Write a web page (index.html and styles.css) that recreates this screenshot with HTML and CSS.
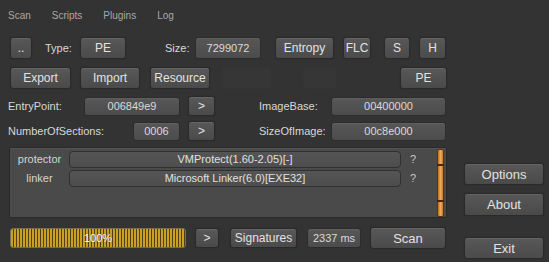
FILE: index.html
```html
<html lang="en"><head>
    <title>Detect It Easy</title>
    <meta charset="utf-8">
    <link rel="stylesheet" href="styles.css">
  </head>
  <body>

  <div id="window">
    <div id="tabs">
      <span class="tab">Scan</span>
      <span class="tab">Scripts</span>
      <span class="tab">Plugins</span>
      <span class="tab">Log</span>
    </div>

    <div id="content">
      <div id="main">

        <div class="row row-file">
          <span class="btn btn-dots">..</span>
          <span class="label label-type">Type:</span>
          <span class="btn btn-type">PE</span>
          <span class="label label-size">Size:</span>
          <span class="field field-size">7299072</span>
          <span class="btn btn-entropy">Entropy</span>
          <span class="btn btn-flc">FLC</span>
          <span class="btn btn-s">S</span>
          <span class="btn btn-h">H</span>
        </div>

        <div class="row row-tools">
          <span class="btn btn-export">Export</span>
          <span class="btn btn-import">Import</span>
          <span class="btn btn-resource">Resource</span>
          <span class="btn btn-off btn-off1"></span>
          <span class="btn btn-off btn-off2"></span>
          <span class="btn btn-pe">PE</span>
        </div>

        <div class="row row-info">
          <div class="pair">
            <span class="label">EntryPoint:</span>
            <span class="field field-ep">006849e9</span>
          </div>
          <span class="btn btn-go">&gt;</span>
          <div class="pair pair-right">
            <span class="label">ImageBase:</span>
            <span class="field field-wide">00400000</span>
          </div>
        </div>

        <div class="row row-info row-info2">
          <div class="pair">
            <span class="label">NumberOfSections:</span>
            <span class="field field-sec">0006</span>
          </div>
          <span class="btn btn-go">&gt;</span>
          <div class="pair pair-right">
            <span class="label">SizeOfImage:</span>
            <span class="field field-wide">00c8e000</span>
          </div>
        </div>

        <div id="result">
          <div class="result-list">
            <div class="result-row">
              <span class="result-type">protector</span>
              <span class="result-name">VMProtect(1.60-2.05)[-]</span>
              <span class="result-help">?</span>
            </div>
            <div class="result-row">
              <span class="result-type">linker</span>
              <span class="result-name">Microsoft Linker(6.0)[EXE32]</span>
              <span class="result-help">?</span>
            </div>
          </div>
          <div class="scrollbar"></div>
        </div>

        <div class="row row-scan">
          <div class="progress"><span>100%</span></div>
          <span class="btn btn-more">&gt;</span>
          <span class="btn btn-sig">Signatures</span>
          <span class="field field-time">2337 ms</span>
          <span class="btn btn-scan">Scan</span>
        </div>

      </div>

      <div id="side">
        <span class="btn btn-side btn-options">Options</span>
        <span class="btn btn-side btn-about">About</span>
        <span class="btn btn-side btn-exit">Exit</span>
      </div>
    </div>
  </div>

</body></html>
```

FILE: styles.css
```css
      html {
        height: 100%;
      }
      body {
        margin: 0;
        padding: 0;
        background: #333333;
        color: #dddddd;
        font-family: "Liberation Sans", Arial, sans-serif;
        font-size: 11px;
        height: 100%;
      }

      #window {
        padding: 9px 0 0 8px;
      }

      #tabs {
        display: flex;
        gap: 21px;
        height: 13px;
        line-height: 13px;
        font-size: 10px;
        color: #a8a8a8;
      }

      #content {
        display: flex;
        margin-top: 15px;
      }

      #main {
        width: 439px;
      }

      #side {
        display: flex;
        flex-direction: column;
        margin-left: 17px;
        padding-top: 126px;
        width: 80px;
      }

      .row {
        display: flex;
        align-items: center;
      }

      .label {
        white-space: nowrap;
        color: #d8d8d8;
      }

      .btn, .field {
        box-sizing: border-box;
        display: flex;
        align-items: center;
        justify-content: center;
        white-space: nowrap;
        border-radius: 3px;
      }

      .btn {
        font-size: 12px;
        color: #e2e2e2;
        background: linear-gradient(#585858, #4a4a4a);
        border: 1px solid #2a2a2a;
        box-shadow: inset 0 1px 0 rgba(255,255,255,0.08), 0 0 1px rgba(0,0,0,0.4);
      }

      .field {
        color: #dadada;
        background: linear-gradient(#575757, #4c4c4c);
        border: 1px solid #2c2c2c;
        box-shadow: inset 0 1px 0 rgba(255,255,255,0.06);
      }

      /* first row */
      .row-file { height: 22px; }
      .row-file .btn, .row-file .field { height: 22px; }
      .btn-dots { margin-left: 2px; width: 22px; }
      .label-type { margin-left: 13px; width: 35px; }
      .btn-type { width: 46px; }
      .label-size { margin-left: 39px; width: 30px; }
      .field-size { width: 66px; }
      .btn-entropy { margin-left: 14px; width: 59px; }
      .btn-flc { margin-left: 9px; width: 28px; }
      .btn-s { margin-left: 13px; width: 26px; }
      .btn-h { margin-left: 9px; width: 27px; }

      /* second row */
      .row-tools { height: 22px; margin-top: 8px; }
      .row-tools .btn { height: 22px; }
      .btn-export { margin-left: 2px; width: 61px; }
      .btn-import { margin-left: 9px; width: 60px; }
      .btn-resource { margin-left: 10px; width: 60px; }
      .btn-off {
        background: #363636;
        border-color: #353535;
        box-shadow: none;
      }
      .btn-off1 { margin-left: 12px; width: 49px; }
      .btn-off2 { margin-left: 32px; width: 33px; }
      .btn-pe { margin-left: auto; width: 47px; }

      /* header values */
      .row-info { height: 20px; margin-top: 7px; }
      .row-info2 { margin-top: 5px; }
      .pair {
        display: flex;
        align-items: center;
        justify-content: space-between;
        width: 172px;
        height: 20px;
      }
      .pair-right {
        margin-left: 44px;
        width: 187px;
      }
      .pair .field { height: 19px; }
      .field-ep { width: 96px; }
      .field-sec { width: 47px; }
      .field-wide { width: 115px; }
      .btn-go { margin-left: 8px; width: 27px; height: 20px; }

      /* detection result */
      #result {
        box-sizing: border-box;
        display: flex;
        margin: 6px 0 0 1px;
        height: 71px;
        background: #4a4a4a;
        border: 1px solid #2a2a2a;
        border-radius: 2px;
        box-shadow: inset 0 1px 0 rgba(255,255,255,0.06);
      }
      .result-list {
        flex: 1;
        padding-top: 2px;
      }
      .result-row {
        display: grid;
        grid-template-columns: 59px 332px 1fr;
        align-items: center;
        height: 18px;
        margin-bottom: 1px;
      }
      .result-type {
        text-align: center;
        color: #d4d4d4;
      }
      .result-name {
        box-sizing: border-box;
        height: 17px;
        line-height: 15px;
        text-align: center;
        color: #e0e0e0;
        background: linear-gradient(#555555, #4d4d4d);
        border: 1px solid #303030;
        border-radius: 4px;
      }
      .result-help {
        padding-left: 9px;
        color: #c8c8c8;
      }
      .scrollbar {
        position: relative;
        box-sizing: border-box;
        width: 7px;
        margin: 1px 2px 0 0;
        height: 68px;
        background: linear-gradient(90deg, #b8701e, #f2aa55 50%, #c27a26);
        border: 1px solid #5a3410;
        border-radius: 2px;
      }
      .scrollbar::before, .scrollbar::after {
        content: "";
        position: absolute;
        left: -1px;
        right: -1px;
        height: 2px;
        background: #4a2608;
      }
      .scrollbar::before { top: 14px; }
      .scrollbar::after { bottom: 14px; }

      /* bottom row */
      .row-scan { height: 22px; margin-top: 9px; }
      .progress {
        box-sizing: border-box;
        display: flex;
        align-items: center;
        justify-content: center;
        margin-left: 2px;
        width: 176px;
        height: 20px;
        border: 1px solid #7a6c52;
        border-radius: 3px;
        background: repeating-linear-gradient(90deg, #c9a024 0 2px, #4e3f14 2px 3px);
        color: #ffffff;
        font-size: 11px;
        text-shadow: 0 0 2px #6b5210;
      }
      .btn-more { margin-left: 9px; width: 24px; height: 20px; }
      .btn-sig { margin-left: 11px; width: 67px; height: 20px; }
      .field-time { margin-left: 10px; width: 54px; height: 20px; font-size: 11px; }
      .btn-scan { margin-left: 9px; width: 76px; height: 22px; font-size: 13px; }

      /* side buttons */
      .btn-side { font-size: 13px; width: 80px; }
      .btn-options { height: 22px; }
      .btn-about { height: 23px; margin-top: 8px; }
      .btn-exit { height: 22px; margin-top: 21px; }
```
